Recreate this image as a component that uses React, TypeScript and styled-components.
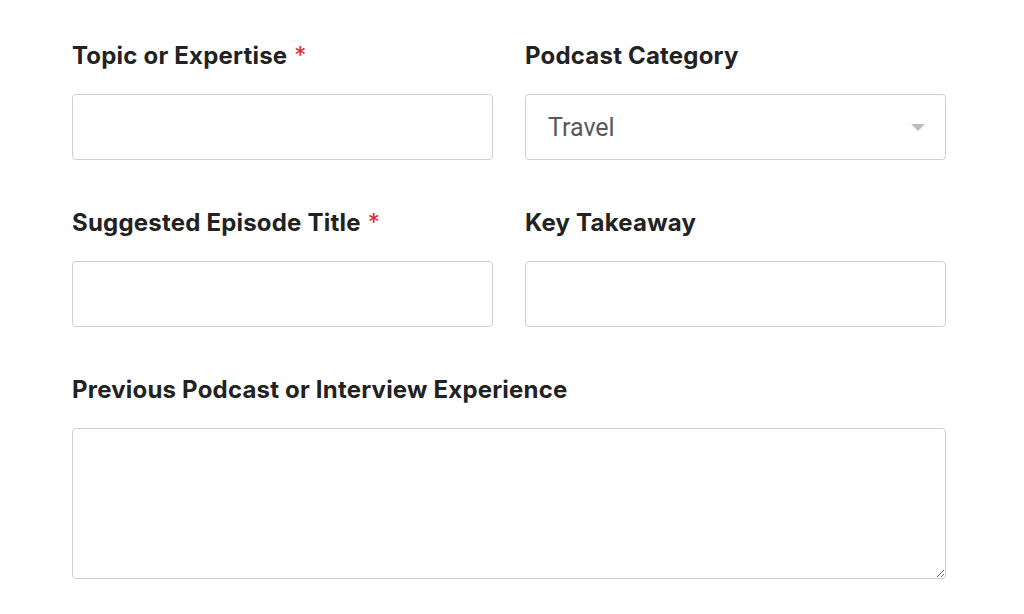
import React from "react";
import styled, { createGlobalStyle } from "styled-components";

const Global = createGlobalStyle`
  html, body { margin: 0; padding: 0; background: #fff; }
  * { box-sizing: border-box; }
`;

const Form = styled.form`
  width: 874px;
  margin: 41px 0 0 72px;
  display: grid;
  grid-template-columns: 1fr 1fr;
  column-gap: 32px;
  row-gap: 48px;
`;

const Field = styled.div<{ $full?: boolean }>`
  display: flex;
  flex-direction: column;
  gap: 23px;
  grid-column: ${(p) => (p.$full ? "1 / -1" : "auto")};
`;

const Label = styled.label`
  font-family: Inter, "Liberation Sans", sans-serif;
  font-weight: 700;
  font-size: 24px;
  line-height: 30px;
  color: #222;
  letter-spacing: 0.2px;
`;

const Req = styled.span`
  color: #e0282e;
  font-weight: 400;
  margin-left: 7px;
`;

const Input = styled.input`
  height: 66px;
  width: 100%;
  border: 1.5px solid #cfcfcf;
  border-radius: 4px;
  background: #fff;
  outline: none;
  padding: 0 22px;
  font-size: 22px;
`;

const SelectBox = styled.div`
  position: relative;
  height: 66px;
  border: 1.5px solid #cfcfcf;
  border-radius: 4px;
  background: #fff;
  display: flex;
  align-items: center;
  padding: 0 22px;
  font-family: Roboto, "Liberation Sans", sans-serif;
  font-size: 25px;
  color: #595959;
`;

const Arrow = styled.span`
  position: absolute;
  right: 20px;
  top: 50%;
  margin-top: -3px;
  width: 0;
  height: 0;
  border-left: 7px solid transparent;
  border-right: 7px solid transparent;
  border-top: 7px solid #bdbdbd;
`;

const TextArea = styled.textarea`
  height: 151px;
  width: 100%;
  border: 1.5px solid #cfcfcf;
  border-radius: 4px;
  background: #fff;
  outline: none;
  resize: vertical;
  padding: 16px 22px;
  font-size: 22px;
`;

export default function App() {
  return (
    <>
      <Global />
      <Form>
        <Field>
          <Label>
            Topic or Expertise<Req>*</Req>
          </Label>
          <Input />
        </Field>
        <Field>
          <Label>Podcast Category</Label>
          <SelectBox>
            Travel
            <Arrow />
          </SelectBox>
        </Field>
        <Field>
          <Label>
            Suggested Episode Title<Req>*</Req>
          </Label>
          <Input />
        </Field>
        <Field>
          <Label>Key Takeaway</Label>
          <Input />
        </Field>
        <Field $full>
          <Label>Previous Podcast or Interview Experience</Label>
          <TextArea />
        </Field>
      </Form>
    </>
  );
}
